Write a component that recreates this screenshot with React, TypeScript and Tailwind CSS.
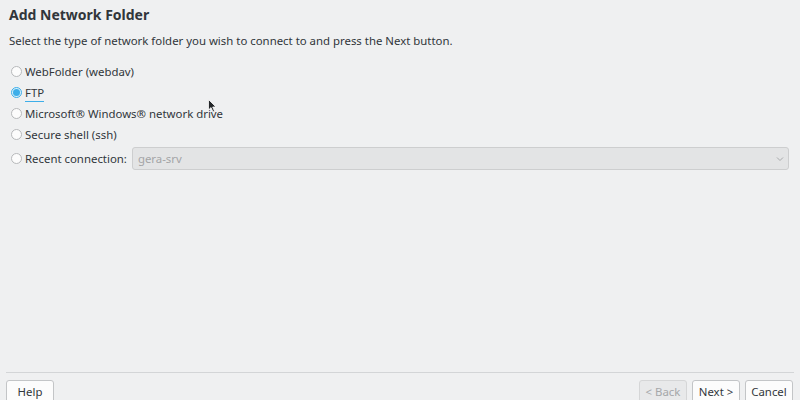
import React from "react";

const options = [
  { label: "WebFolder (webdav)", checked: false },
  { label: "FTP", checked: true },
  { label: "Microsoft® Windows® network drive", checked: false },
  { label: "Secure shell (ssh)", checked: false },
];

function Radio({ checked }: { checked: boolean }) {
  return checked ? (
    <span className="flex h-[11px] w-[11px] items-center justify-center rounded-full border border-[#3daee9] bg-[#d6eefa]">
      <span className="h-[7px] w-[7px] rounded-full bg-[#3daee9]" />
    </span>
  ) : (
    <span className="h-[11px] w-[11px] rounded-full border border-[#b7b9bb] bg-[#fcfcfc]" />
  );
}

function Btn({ label, disabled }: { label: string; disabled?: boolean }) {
  return (
    <button
      className={
        disabled
          ? "h-[26px] w-[48px] shrink-0 rounded-[3px] border border-[#d5d6d7] bg-[#e8e9ea] pb-[3px] text-[11.4px] text-[#a5a7a9]"
          : "h-[26px] w-[48px] shrink-0 rounded-[3px] border border-[#c3c5c7] bg-[#fcfcfc] pb-[3px] text-[11.4px] text-[#31363b]"
      }
    >
      {label}
    </button>
  );
}

export default function App() {
  return (
    <div
      className="relative flex h-[400px] w-[800px] flex-col overflow-hidden bg-[#eff0f1] text-[#31363b]"
      style={{ fontFamily: '"Noto Sans", "Open Sans", sans-serif' }}
    >
      <div className="px-[9px] pt-[5px]">
        <h1 className="text-[14px] font-bold leading-[20px]">Add Network Folder</h1>
        <p className="mt-[8px] text-[11.4px] leading-[16px]">
          Select the type of network folder you wish to connect to and press the Next button.
        </p>
      </div>

      <div className="mt-[12px] flex flex-col px-[11px] text-[11.4px]">
        {options.map((o) => (
          <div key={o.label} className="flex h-[21px] items-center gap-[3px]">
            <Radio checked={o.checked} />
            <span className="relative">
              {o.label}
              {o.checked && <span className="absolute bottom-[-1px] left-0 h-px w-full bg-[#3daee9]" />}
            </span>
          </div>
        ))}
        <div className="mt-[2px] flex h-[23px] items-center gap-[3px]">
          <Radio checked={false} />
          <span>Recent connection:</span>
          <div className="ml-[2px] flex h-[23px] flex-1 items-center justify-between rounded-[3px] border border-[#cdcecf] bg-[#e3e4e5] pl-[5px] pr-[4px] text-[#a3a5a7]">
            <span>gera-srv</span>
            <svg width="8" height="6" viewBox="0 0 8 6">
              <path d="M1 1.5 L4 4.5 L7 1.5" fill="none" stroke="#a8aaac" strokeWidth="1" />
            </svg>
          </div>
        </div>
      </div>

      <div className="flex-1" />

      <div className="mx-[6px] h-px shrink-0 bg-[#d3d5d7]" />
      <div className="mt-[7px] flex h-[20px] shrink-0 items-start justify-between px-[6px]">
        <Btn label="Help" />
        <div className="flex gap-[5px] pr-[1px]">
          <Btn label="< Back" disabled />
          <Btn label="Next >" />
          <Btn label="Cancel" />
        </div>
      </div>

      <svg className="absolute left-[208px] top-[99px]" width="9" height="14" viewBox="0 0 9 14">
        <path d="M0.5 0.5 L0.5 11 L3 8.6 L5 13 L6.6 12.3 L4.7 8 L8 8 Z" fill="#232629" stroke="#fcfcfc" strokeWidth="0.8" />
      </svg>
    </div>
  );
}
